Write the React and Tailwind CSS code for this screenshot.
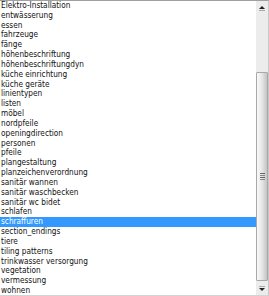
import React from "react";

const items = [
  "Elektro-Installation",
  "entwässerung",
  "essen",
  "fahrzeuge",
  "fänge",
  "höhenbeschriftung",
  "höhenbeschriftungdyn",
  "küche einrichtung",
  "küche geräte",
  "linientypen",
  "listen",
  "möbel",
  "nordpfeile",
  "openingdirection",
  "personen",
  "pfeile",
  "plangestaltung",
  "planzeichenverordnung",
  "sanitär wannen",
  "sanitär waschbecken",
  "sanitär wc bidet",
  "schlafen",
  "schraffuren",
  "section_endings",
  "tiere",
  "tiling patterns",
  "trinkwasser versorgung",
  "vegetation",
  "vermessung",
  "wohnen",
];

export default function App() {
  return (
    <div className="w-[269px] h-[296px] bg-white flex border-t border-t-[#a0a0a0] border-r border-r-[#c8c8c8] border-b border-b-[#d4d4d4] overflow-hidden">
      <div className="flex-1 flex flex-col pt-0 text-[8.2px] text-[#111] font-stretch-condensed" style={{ fontFamily: '"DejaVu Sans Condensed", "DejaVu Sans", sans-serif' }}>
        {items.map((t) => (
          <div
            key={t}
            className={
              "h-[9.83px] leading-[9.83px] pl-[1px] whitespace-nowrap " +
              (t === "schraffuren" ? "bg-[#3399ff] text-white" : "")
            }
          >
            {t}
          </div>
        ))}
      </div>
      <div className="w-[12px] bg-[#ececec] flex flex-col items-stretch">
        <div className="h-[14px] flex items-center justify-center">
          <svg width="6" height="5" viewBox="0 0 6 5">
            <path d="M3 0 L6 3 L0 3 Z" fill="#222" />
            <rect x="0" y="4" width="6" height="1" fill="#aaa" />
          </svg>
        </div>
        <div className="h-[57px]" />
        <div className="h-[209px] border border-[#a8a8a8] rounded-[1px] bg-gradient-to-r from-[#fafafa] via-[#e6e6e6] to-[#c4c4c4] flex items-center justify-center">
          <div className="flex flex-col gap-[1px]">
            <div className="w-[5px] h-[1px] bg-[#666]" />
            <div className="w-[5px] h-[1px] bg-[#888]" />
            <div className="w-[5px] h-[1px] bg-[#666]" />
            <div className="w-[5px] h-[1px] bg-[#888]" />
          </div>
        </div>
        <div className="flex-1 flex items-center justify-center">
          <svg width="6" height="5" viewBox="0 0 6 5">
            <rect x="0" y="0" width="6" height="1" fill="#aaa" />
            <path d="M0 2 L6 2 L3 5 Z" fill="#222" />
          </svg>
        </div>
      </div>
    </div>
  );
}
